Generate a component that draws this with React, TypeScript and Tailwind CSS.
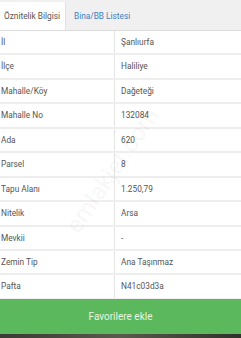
import React from 'react';

const rows: [string, string][] = [
  ['İl', 'Şanlıurfa'],
  ['İlçe', 'Haliliye'],
  ['Mahalle/Köy', 'Dağeteği'],
  ['Mahalle No', '132084'],
  ['Ada', '620'],
  ['Parsel', '8'],
  ['Tapu Alanı', '1.250,79'],
  ['Nitelik', 'Arsa'],
  ['Mevkii', '-'],
  ['Zemin Tip', 'Ana Taşınmaz'],
  ['Pafta', 'N41c03d3a'],
];

export default function App() {
  return (
    <div className="relative w-[241px] h-[338px] overflow-hidden bg-white font-['Roboto',sans-serif] text-[8.3px] text-[#555]">
      {/* tabs */}
      <div className="flex h-[31px] bg-[#f0f0f0] border-b border-[#dcdcdc] pt-[2px]">
        <div className="w-[66px] bg-white border-r border-[#e2e2e2] flex items-center pl-[4px] text-[#555]">
          Öznitelik Bilgisi
        </div>
        <div className="flex items-center pl-[8px] text-[#3d7dbf]">Bina/BB Listesi</div>
      </div>

      {/* attribute table */}
      <div className="flex flex-col">
        {rows.map(([label, value]) => (
          <div key={label} className="flex h-[24.45px] border-b-2 border-[#eeeeee]">
            <div className="w-[115px] border-r border-[#e4e4e4] flex items-center pl-[1px]">{label}</div>
            <div className="flex-1 flex items-center pl-[6px]">{value}</div>
          </div>
        ))}
      </div>

      {/* watermark */}
      <div className="pointer-events-none absolute left-[42px] top-[156px] w-[136px] text-center -rotate-[56deg] text-[24px] text-[#000]/[0.05]">
        emlakjet.com
      </div>

      {/* button */}
      <div className="absolute left-0 right-0 top-[299px] h-[35px] bg-[#5cb85c] flex items-center justify-center text-[10px] text-[#e6f5e3]">
        Favorilere ekle
      </div>
      <div className="absolute left-0 right-0 top-[334px] h-[4px] bg-gradient-to-r from-[#3b3a33] via-[#5a5a4c] to-[#2f3229]" />
    </div>
  );
}
